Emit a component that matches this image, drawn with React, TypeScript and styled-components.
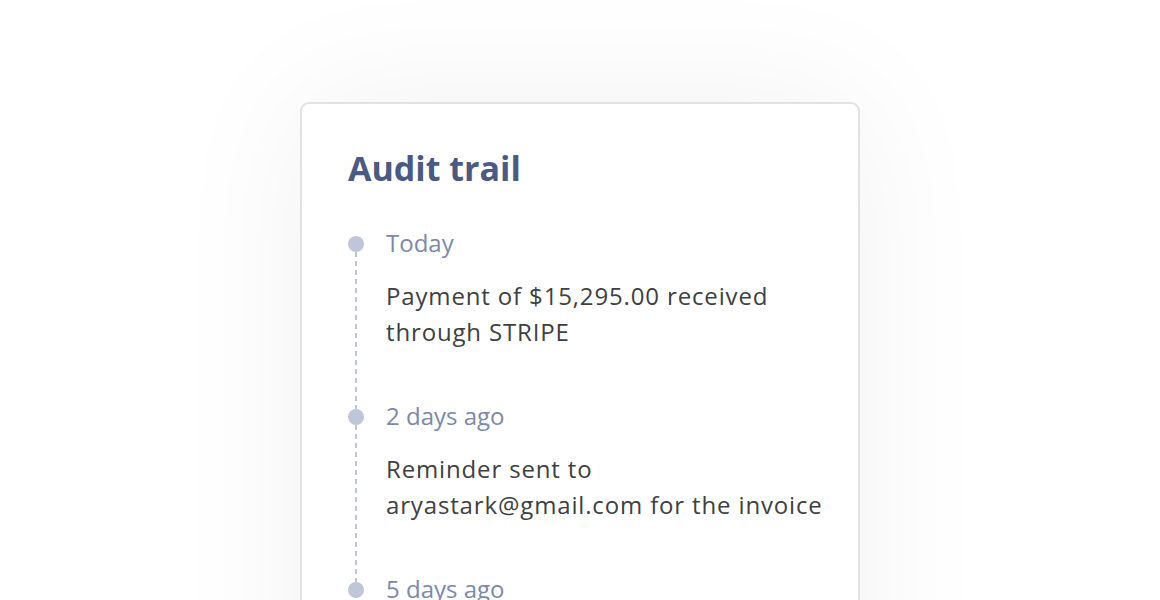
import React from "react";
import styled, { createGlobalStyle } from "styled-components";

const GlobalStyle = createGlobalStyle`
  html, body {
    margin: 0;
    padding: 0;
    background: #ffffff;
  }
  body {
    font-family: "Open Sans", "Noto Sans", sans-serif;
    -webkit-font-smoothing: antialiased;
  }
`;

const Page = styled.div`
  display: flex;
  justify-content: center;
  padding-top: 102px;
  min-height: 600px;
  box-sizing: border-box;
`;

const Card = styled.section`
  width: 560px;
  box-sizing: border-box;
  padding: 40px 30px 48px 46px;
  background: #fff;
  border: 2px solid #e2e2e4;
  border-radius: 9px;
  box-shadow: 0 0 140px rgba(0, 0, 0, 0.06);
`;

const Title = styled.h2`
  margin: 0 0 36px;
  font-size: 34px;
  font-weight: 700;
  line-height: 48px;
  color: #4b5a82;
`;

const List = styled.ol`
  list-style: none;
  margin: 0;
  padding: 0;
`;

const Item = styled.li`
  display: grid;
  grid-template-columns: 16px 1fr;
  column-gap: 22px;
`;

const Rail = styled.div`
  display: flex;
  flex-direction: column;
  align-items: center;
  padding-top: 8px;
`;

const Dot = styled.span`
  width: 16px;
  height: 16px;
  border-radius: 50%;
  background: #bfc6da;
  flex: none;
`;

const Line = styled.span<{ $last?: boolean }>`
  flex: 1;
  width: 2px;
  margin-bottom: -8px;
  background: ${(p) =>
    p.$last
      ? "transparent"
      : "repeating-linear-gradient(to bottom, #bfc5d6 0 5px, transparent 5px 9px)"};
`;

const Content = styled.div`
  padding-bottom: 51px;
`;

const When = styled.div`
  font-size: 24px;
  line-height: 30px;
  color: #7c89ab;
`;

const What = styled.p`
  margin: 20px 0 0;
  font-size: 24px;
  letter-spacing: 0.85px;
  line-height: 36px;
  color: #404042;
  white-space: nowrap;
`;

const events = [
  { when: "Today", lines: ["Payment of $15,295.00 received", "through STRIPE"] },
  { when: "2 days ago", lines: ["Reminder sent to", "aryastark@gmail.com for the invoice"] },
  { when: "5 days ago", lines: ["Invoice sent to", "aryastark@gmail.com"] },
];

export default function App() {
  return (
    <>
      <GlobalStyle />
      <Page>
        <Card>
          <Title>Audit trail</Title>
          <List>
            {events.map((e, i) => (
              <Item key={e.when}>
                <Rail>
                  <Dot />
                  <Line $last={i === events.length - 1} />
                </Rail>
                <Content>
                  <When>{e.when}</When>
                  <What>
                    {e.lines[0]}
                    <br />
                    {e.lines[1]}
                  </What>
                </Content>
              </Item>
            ))}
          </List>
        </Card>
      </Page>
    </>
  );
}
